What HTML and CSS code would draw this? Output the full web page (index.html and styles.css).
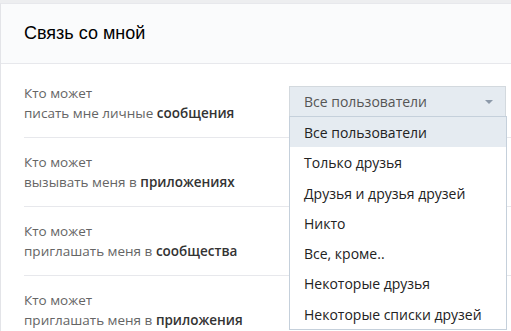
FILE: index.html
```html
<!DOCTYPE html>
<html lang="ru">
  <head>
    <meta charset="utf8" />
    <title>Связь со мной</title>
    <link rel="stylesheet" href="styles.css">
  </head>
  <body>
    <div class="card">
      <div class="card-header">Связь со мной</div>
      <div class="card-body">
        <div class="row">
          <div class="row-label">Кто может<br>писать мне личные <b>сообщения</b></div>
          <div class="select-wrap">
            <div class="select">
              <span>Все пользователи</span>
              <span class="arrow"></span>
            </div>
            <ul class="options">
              <li class="active">Все пользователи</li>
              <li>Только друзья</li>
              <li>Друзья и друзья друзей</li>
              <li>Никто</li>
              <li>Все, кроме..</li>
              <li>Некоторые друзья</li>
              <li>Некоторые списки друзей</li>
            </ul>
          </div>
        </div>
        <div class="row">
          <div class="row-label">Кто может<br>вызывать меня в <b>приложениях</b></div>
        </div>
        <div class="row">
          <div class="row-label">Кто может<br>приглашать меня в <b>сообщества</b></div>
        </div>
        <div class="row">
          <div class="row-label">Кто может<br>приглашать меня в <b>приложения</b></div>
        </div>
      </div>
    </div>
  </body>
</html>
```

FILE: styles.css
```css
/* Reset */
body, html {
  margin: 0;
  padding: 0;
  font-family: "Open Sans", sans-serif;
  overflow: hidden;
}
* {
  box-sizing: border-box;
}
body {
  background: #edeef0;
  padding-top: 3px;
  height: 331px;
}
.card {
  background: #fff;
  border-left: 1px solid #e3e4e8;
  border-top: 1px solid #e7e8ec;
  width: 560px;
  height: 400px;
}
.card-header {
  background: #fafbfc;
  border-bottom: 1px solid #e7e8ec;
  height: 60px;
  padding: 0 23px;
  display: flex;
  align-items: center;
  font-family: "Liberation Sans", sans-serif;
  font-size: 18px;
  color: #000;
}
.card-body {
  padding: 5px 24px 0 23px;
}
.row {
  display: flex;
  align-items: flex-start;
  padding: 14px 0;
  border-bottom: 1px solid #e7e8ec;
  font-size: 13.5px;
  line-height: 20px;
  color: #656565;
}
.row-label {
  width: 265px;
}
.row-label b {
  color: #333;
  font-weight: 600;
}
.select-wrap {
  position: relative;
  width: 217px;
  margin-top: 3px;
  font-size: 14px;
}
.select {
  height: 30px;
  background: #e5ebf1;
  border: 1px solid #d3d9de;
  border-bottom: none;
  display: flex;
  align-items: center;
  justify-content: space-between;
  padding: 0 12px 0 14px;
  color: #555;
}
.arrow {
  border-left: 4px solid transparent;
  border-right: 4px solid transparent;
  border-top: 4px solid #8d9aaa;
}
.options {
  position: absolute;
  top: 30px;
  left: 0;
  width: 218px;
  margin: 0;
  padding: 0;
  list-style: none;
  background: #fff;
  border: 1px solid #c5d0db;
  color: #222;
}
.options li {
  height: 30.3px;
  line-height: 32px;
  padding-left: 14px;
}
.options li.active {
  background: #e5ebf1;
}
```
